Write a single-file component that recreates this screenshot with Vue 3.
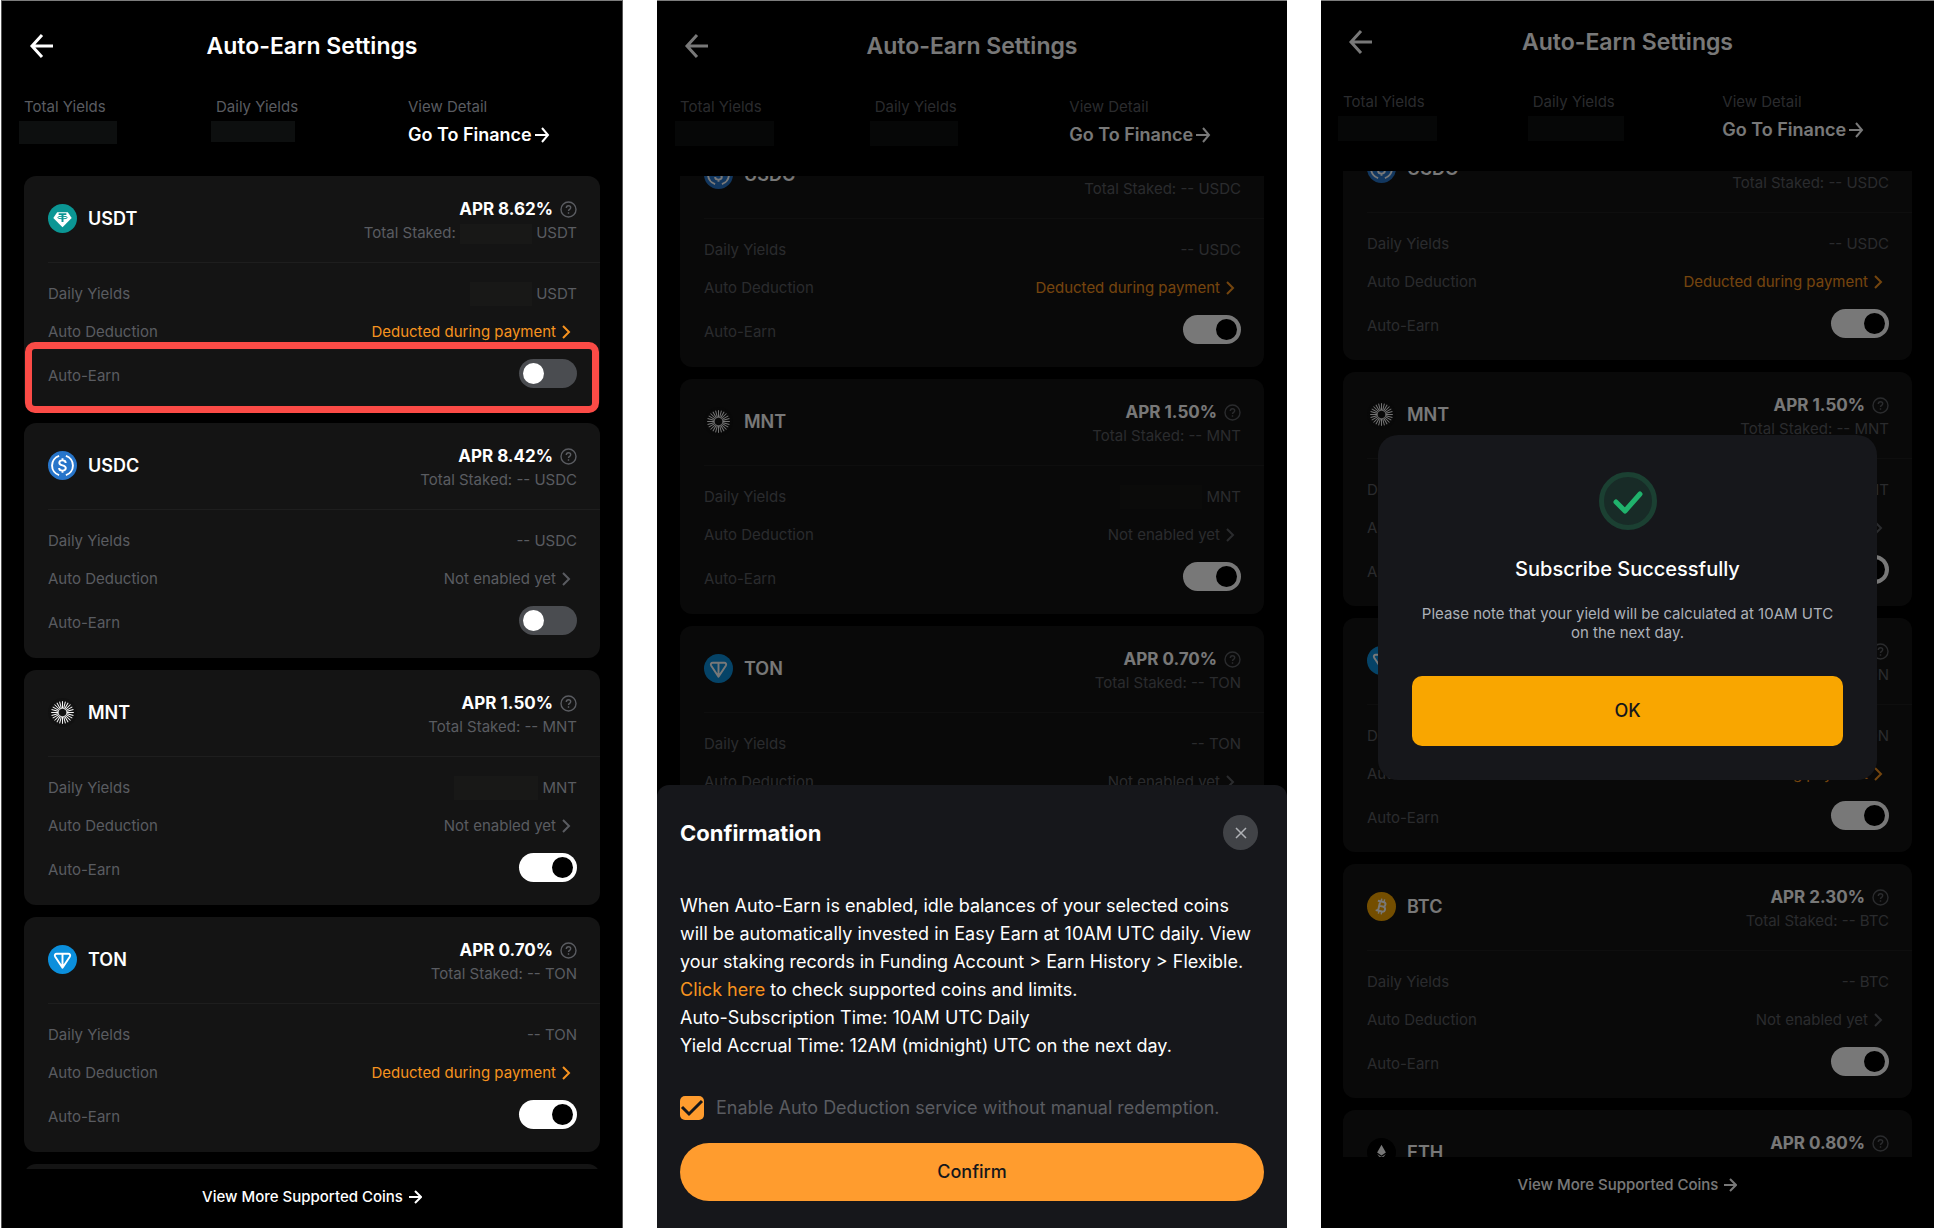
<script setup>
import { onMounted, ref } from 'vue'

const USDT = { id: 'USDT', apr: '8.62%' }
const USDC = { id: 'USDC', apr: '8.42%' }
const MNT = { id: 'MNT', apr: '1.50%' }
const TON = { id: 'TON', apr: '0.70%' }
const BTC = { id: 'BTC', apr: '2.30%' }
const ETH = { id: 'ETH', apr: '0.80%' }

const phones = [
  {
    key: 'settings',
    scroll: 0,
    hidden: [{ w: 98, h: 23 }, { w: 84, h: 21 }],
    coins: [
      { ...USDT, on: false, deducted: true, hideStaked: 72, hideYield: 62, marked: true },
      { ...USDC, on: false, deducted: false },
      { ...MNT, on: true, deducted: false, hideYield: 84 },
      { ...TON, on: true, deducted: true },
      { ...BTC, on: true, deducted: false },
      { ...ETH, on: true, deducted: false },
    ],
  },
  {
    key: 'confirm',
    scroll: 291,
    hidden: [{ w: 99, h: 25 }, { w: 88, h: 25 }],
    coins: [
      { ...USDT, on: true, deducted: true },
      { ...USDC, on: true, deducted: true },
      { ...MNT, on: true, deducted: false, hideYield: 82 },
      { ...TON, on: true, deducted: false },
      { ...BTC, on: true, deducted: false },
      { ...ETH, on: true, deducted: false },
    ],
  },
  {
    key: 'success',
    scroll: 291,
    hidden: [{ w: 99, h: 25 }, { w: 96, h: 25 }],
    coins: [
      { ...USDT, on: true, deducted: true },
      { ...USDC, on: true, deducted: true },
      { ...MNT, on: true, deducted: false, hideYield: 82 },
      { ...TON, on: true, deducted: true },
      { ...BTC, on: true, deducted: false },
      { ...ETH, on: true, deducted: false },
    ],
  },
]

const rays = Array.from({ length: 24 }, (_, i) => i * 15)
const lists = ref([])

onMounted(() => {
  lists.value.forEach((el) => {
    el.scrollTop = Number(el.dataset.scroll)
  })
})
</script>

<template>
  <main class="page">
    <section v-for="p in phones" :key="p.key" class="phone" :class="p.key">
      <header class="bar">
        <button class="back" type="button" aria-label="Back">
          <svg width="26" height="26" viewBox="0 0 26 26" fill="none" stroke="currentColor" stroke-width="3">
            <path d="M24 13H3M13 2L3 13l10 11" />
          </svg>
        </button>
        <h1>Auto-Earn Settings</h1>
      </header>

      <div class="stats">
        <div>
          <p class="label">Total Yields</p>
          <p class="value"><span class="redact" :style="{ width: p.hidden[0].w + 'px', height: p.hidden[0].h + 'px' }"></span></p>
        </div>
        <div>
          <p class="label">Daily Yields</p>
          <p class="value"><span class="redact" :style="{ width: p.hidden[1].w + 'px', height: p.hidden[1].h + 'px' }"></span></p>
        </div>
        <div>
          <p class="label">View Detail</p>
          <a class="value finance" href="#finance">Go To Finance<svg width="15" height="18" viewBox="0 0 15 18" fill="none" stroke="currentColor" stroke-width="2"><path d="M0 9h13M7 2l6 7-6 7" /></svg></a>
        </div>
      </div>

      <div ref="lists" class="list" :data-scroll="p.scroll">
        <article v-for="c in p.coins" :key="c.id" class="card">
          <div class="head">
            <h2 class="coin">
              <svg class="logo" viewBox="0 0 30 30">
                <template v-if="c.id === 'USDT'">
                  <circle cx="15" cy="15" r="15" fill="#0b9694" />
                  <path d="M9.500 8.500h11l4 6L15 24l-9.500-9.500z" fill="#fff" />
                  <path d="M11 10.500h8M15 10.500v8" stroke="#0b9694" stroke-width="2" fill="none" />
                  <ellipse cx="15" cy="14" rx="5" ry="1.300" stroke="#0b9694" fill="none" />
                </template>
                <template v-else-if="c.id === 'USDC'">
                  <circle cx="15" cy="15" r="15" fill="#2775ca" />
                  <g fill="none" stroke="#fff" stroke-width="2">
                    <path d="M11.500 5a10.500 10.500 0 0 0 0 20M18.500 5a10.500 10.500 0 0 1 0 20" />
                    <path d="M18.300 12.300c0-1.600-1.400-2.600-3.300-2.600s-3.300.9-3.300 2.500c0 3.700 6.700 1.700 6.700 5.500 0 1.600-1.400 2.600-3.400 2.600s-3.500-1-3.500-2.700M15 7.500v2M15 20.500v2" />
                  </g>
                </template>
                <template v-else-if="c.id === 'MNT'">
                  <circle cx="15" cy="15" r="15" fill="#111" />
                  <g stroke="#fff">
                    <line v-for="a in rays" :key="a" x1="15" y1="3.300" x2="15" y2="11" :transform="`rotate(${a} 15 15)`" />
                  </g>
                </template>
                <template v-else-if="c.id === 'TON'">
                  <circle cx="15" cy="15" r="15" fill="#0b8fdc" />
                  <path d="M9 9h12c1.500 0 2.400 1.500 1.700 2.800L15 23.500 7.300 11.800C6.600 10.500 7.500 9 9 9zM15 9v14" fill="none" stroke="#fff" stroke-width="2" stroke-linejoin="round" />
                </template>
                <template v-else-if="c.id === 'BTC'">
                  <circle cx="15" cy="15" r="15" fill="#f7a600" />
                  <g fill="none" stroke="#fff" stroke-width="2" transform="rotate(13 15 15)">
                    <path d="M10 10h6c3.400 0 3.400 4.800 0 4.800h-3 3.500c3.700 0 3.700 5.200 0 5.200H10M12.500 10v10" />
                    <path d="M13.500 7v3M16.500 7v3M13.500 20v3M16.500 20v3" stroke-width="1.500" />
                  </g>
                </template>
                <template v-else>
                  <circle cx="15" cy="15" r="15" fill="#000" />
                  <path d="M15 7l4.500 8L15 18l-4.500-3z" fill="#fff" />
                  <path d="M10.500 16.500L15 19.300l4.500-2.800L15 23z" fill="#ccc" />
                </template>
              </svg>
              {{ c.id }}
            </h2>
            <div class="rate">
              <p class="apr">
                APR {{ c.apr }}
                <button class="help" type="button" aria-label="About APR">
                  <svg width="17" height="17" viewBox="0 0 17 17" fill="none" stroke="currentColor" stroke-width="1.400">
                    <circle cx="8.500" cy="8.500" r="7.500" />
                    <path d="M6.300 7c0-1.400 1-2.200 2.200-2.200s2.200.8 2.200 2c0 1.500-2.200 1.600-2.200 3.200M8.500 11.200v1.500" />
                  </svg>
                </button>
              </p>
              <p class="staked">
                Total Staked:
                <span v-if="c.hideStaked" class="blank" :style="{ width: c.hideStaked + 'px' }"></span>
                <template v-else>--</template>
                {{ c.id }}
              </p>
            </div>
          </div>
          <div class="rows">
            <div class="row">
              <span>Daily Yields</span>
              <span>
                <span v-if="c.hideYield" class="blank" :style="{ width: c.hideYield + 'px' }"></span>
                <template v-else>--</template>
                {{ c.id }}
              </span>
            </div>
            <div class="row">
              <span>Auto Deduction</span>
              <a class="more" :class="{ active: c.deducted }" href="#deduction">
                {{ c.deducted ? 'Deducted during payment' : 'Not enabled yet' }}
                <svg width="9" height="14" viewBox="0 0 9 14" fill="none" stroke="currentColor" stroke-width="2"><path d="M1 1l6 6-6 6" /></svg>
              </a>
            </div>
            <div class="row earn">
              <label :for="`${p.key}-${c.id}`">Auto-Earn</label>
              <input :id="`${p.key}-${c.id}`" class="switch" type="checkbox" role="switch" :checked="c.on" />
            </div>
          </div>
          <div v-if="c.marked" class="marker"></div>
        </article>
      </div>

      <footer class="foot">
        <a href="#coins">View More Supported Coins<svg width="13" height="14" viewBox="0 0 13 14" fill="none" stroke="currentColor" stroke-width="2"><path d="M0 7h11M6 1l6 6-6 6" /></svg></a>
      </footer>

      <div v-if="p.key === 'confirm'" class="veil bottom">
        <div class="sheet" role="dialog" aria-label="Confirmation">
          <div class="sheet-head">
            <h2>Confirmation</h2>
            <button class="close" type="button" aria-label="Close">
              <svg width="12" height="12" viewBox="0 0 12 12" fill="none" stroke="currentColor" stroke-width="1.500"><path d="M1 1l10 10M11 1L1 11" /></svg>
            </button>
          </div>
          <p class="terms">
            When Auto-Earn is enabled, idle balances of your selected coins<br />
            will be automatically invested in Easy Earn at 10AM UTC daily. View<br />
            your staking records in Funding Account &gt; Earn History &gt; Flexible.<br />
            <a href="#limits">Click here</a> to check supported coins and limits.<br />
            Auto-Subscription Time: 10AM UTC Daily<br />
            Yield Accrual Time: 12AM (midnight) UTC on the next day.
          </p>
          <label class="agree">
            <span class="tick">
              <input type="checkbox" checked />
              <svg viewBox="0 0 24 24" fill="none" stroke="#16171b" stroke-width="3"><path d="M2 11l7 7L22 5" /></svg>
            </span>
            Enable Auto Deduction service without manual redemption.
          </label>
          <button class="confirm-btn" type="button">Confirm</button>
        </div>
      </div>

      <div v-if="p.key === 'success'" class="veil center">
        <div class="modal" role="dialog" aria-label="Subscribe Successfully">
          <svg class="done" viewBox="0 0 58 58" fill="none">
            <circle cx="29" cy="29" r="26.500" fill="#182b27" stroke="#1b4032" stroke-width="5" />
            <path d="M17 30l9 9 15-17" stroke="#20b26c" stroke-width="5" stroke-linecap="round" stroke-linejoin="round" />
          </svg>
          <h2>Subscribe Successfully</h2>
          <p>Please note that your yield will be calculated at 10AM UTC on the next day.</p>
          <button class="ok-btn" type="button">OK</button>
        </div>
      </div>
    </section>
  </main>
</template>

<style>
body {
  margin: 0;
  background: #fff;
}
</style>

<style scoped>
* {
  box-sizing: border-box;
}

h1,
h2,
p {
  margin: 0;
  font-weight: 400;
}

button {
  padding: 0;
  border: 0;
  background: none;
  color: inherit;
  font: inherit;
  cursor: pointer;
}

a {
  color: inherit;
  text-decoration: none;
}

svg {
  flex: none;
}

.page {
  display: grid;
  grid-template-columns: 623fr 630fr 613fr;
  gap: 34px;
  height: 100vh;
  min-height: 900px;
  font: 15px/24px Inter, 'Liberation Sans', sans-serif;
  color: #fff;
}

.phone {
  --side: 23px;
  --bar: 89px;
  --stats-top: 5px;
  --card-end: 23px;
  --safe: 3px;
  position: relative;
  display: flex;
  flex-direction: column;
  min-width: 0;
  min-height: 0;
  overflow: hidden;
  background: #000;
  border-top: 1px solid #7c7c7c;
}

.settings {
  --side: 22px;
  margin-left: 1px;
  border-left: 1px solid #555;
  border-right: 1px solid #555;
}

.success {
  --side: 22px;
  --bar: 81px;
  --stats-top: 8px;
  --card-end: 22px;
  --safe: 15px;
}

.bar {
  display: grid;
  grid-template-columns: 26px 1fr 26px;
  align-items: center;
  flex: none;
  height: var(--bar);
  padding: 0 27px;
}

.back {
  height: 26px;
}

.back svg {
  display: block;
}

.bar h1 {
  font-size: 23px;
  font-weight: 600;
  text-align: center;
}

.stats {
  display: grid;
  grid-template-columns: repeat(3, 1fr);
  flex: none;
  padding: var(--stats-top) var(--side) 27px;
}

.stats .label {
  color: #5a5c61;
}

.value {
  display: flex;
  align-items: flex-start;
  height: 28px;
  margin-top: 2px;
}

.redact {
  margin-left: -5px;
  background: #0d0f0f;
}

.finance {
  align-items: center;
  gap: 3px;
  font-size: 18px;
  font-weight: 600;
}

.list {
  display: flex;
  flex: 1;
  flex-direction: column;
  gap: 12px;
  min-height: 0;
  padding: 0 var(--side);
  overflow-y: auto;
  scrollbar-width: none;
}

.card {
  position: relative;
  flex: none;
  padding-bottom: var(--card-end);
  border-radius: 12px;
  background: #141414;
  color: #5a5c61;
}

.head {
  display: flex;
  align-items: flex-start;
  justify-content: space-between;
  margin-left: 24px;
  padding: 20px 23px 18px 0;
  border-bottom: 1px solid #1e1e1e;
}

.coin {
  display: flex;
  align-items: center;
  gap: 11px;
  height: 45px;
  font-size: 18px;
  font-weight: 600;
  color: #fff;
}

.logo {
  width: 29px;
  height: 29px;
}

.rate {
  text-align: right;
}

.apr {
  display: flex;
  align-items: center;
  justify-content: flex-end;
  gap: 7px;
  height: 26px;
  font-size: 17px;
  font-weight: 700;
  color: #fff;
}

.help {
  height: 17px;
  color: #5a5c61;
}

.help svg {
  display: block;
}

.staked {
  line-height: 22px;
}

.blank {
  display: inline-block;
  height: 24px;
  vertical-align: middle;
  background: #181817;
}

.staked .blank {
  height: 20px;
}

.rows {
  padding: 12px 23px 0 24px;
}

.row {
  display: flex;
  align-items: center;
  justify-content: space-between;
  height: 38px;
}

.earn {
  align-items: flex-end;
  height: 37px;
}

.more {
  display: flex;
  align-items: center;
  gap: 6px;
  padding-right: 6px;
}

.more.active {
  color: #f7931f;
}

.switch {
  appearance: none;
  display: flex;
  align-items: center;
  width: 58px;
  height: 29px;
  margin: 0;
  padding: 0 4px;
  border-radius: 15px;
  background: #4a4c50;
}

.switch::before {
  content: '';
  width: 21px;
  height: 21px;
  border-radius: 50%;
  background: #fff;
}

.switch:checked {
  justify-content: flex-end;
  background: #fff;
}

.switch:checked::before {
  background: #000;
}

.marker {
  position: absolute;
  inset: 166px 1px -2px;
  border: 7px solid #fb4b46;
  border-radius: 10px;
}

.foot {
  flex: none;
  padding-bottom: var(--safe);
  font-weight: 500;
}

.foot a {
  display: flex;
  align-items: center;
  justify-content: center;
  gap: 6px;
  height: 56px;
}

.veil {
  position: absolute;
  inset: 0;
  display: flex;
  flex-direction: column;
  background: rgba(0, 0, 0, 0.53);
}

.bottom {
  justify-content: flex-end;
}

.center {
  justify-content: center;
  padding: 0 57px var(--safe);
}

.sheet {
  padding: 30px 23px 27px;
  border-radius: 12px 12px 0 0;
  background: #16171b;
}

.sheet-head {
  display: flex;
  align-items: center;
  justify-content: space-between;
  padding-right: 6px;
}

.sheet-head h2 {
  font-size: 22px;
  font-weight: 700;
}

.close {
  display: grid;
  place-items: center;
  width: 35px;
  height: 35px;
  border-radius: 50%;
  background: #414347;
  color: #b0b2b6;
}

.terms {
  margin-top: 42px;
  font-size: 18px;
  line-height: 28px;
  white-space: nowrap;
}

.terms a {
  color: #f7931f;
}

.agree {
  display: flex;
  align-items: center;
  gap: 12px;
  margin-top: 36px;
  font-size: 18px;
  color: #5a5c61;
  white-space: nowrap;
}

.tick {
  display: grid;
  flex: none;
  width: 24px;
  height: 24px;
}

.tick > * {
  grid-area: 1 / 1;
}

.tick input {
  appearance: none;
  width: 24px;
  height: 24px;
  margin: 0;
  border-radius: 5px;
  background: #ff9c2e;
}

.tick svg {
  pointer-events: none;
}

.confirm-btn {
  width: 100%;
  height: 58px;
  margin-top: 23px;
  border-radius: 29px;
  background: #ff9c2e;
  color: #16171b;
  font-size: 18px;
  font-weight: 500;
}

.modal {
  display: flex;
  flex-direction: column;
  align-items: center;
  padding: 37px 34px 34px;
  border-radius: 20px;
  background: #16171b;
  text-align: center;
}

.done {
  width: 58px;
  height: 58px;
}

.modal h2 {
  margin-top: 25px;
  font-size: 20px;
  font-weight: 500;
  line-height: 28px;
}

.modal p {
  margin-top: 21px;
  line-height: 19px;
  color: #adb1b8;
}

.ok-btn {
  width: 100%;
  height: 70px;
  margin-top: 34px;
  border-radius: 10px;
  background: #f9a600;
  color: #16171b;
  font-size: 18px;
  font-weight: 500;
}
</style>
